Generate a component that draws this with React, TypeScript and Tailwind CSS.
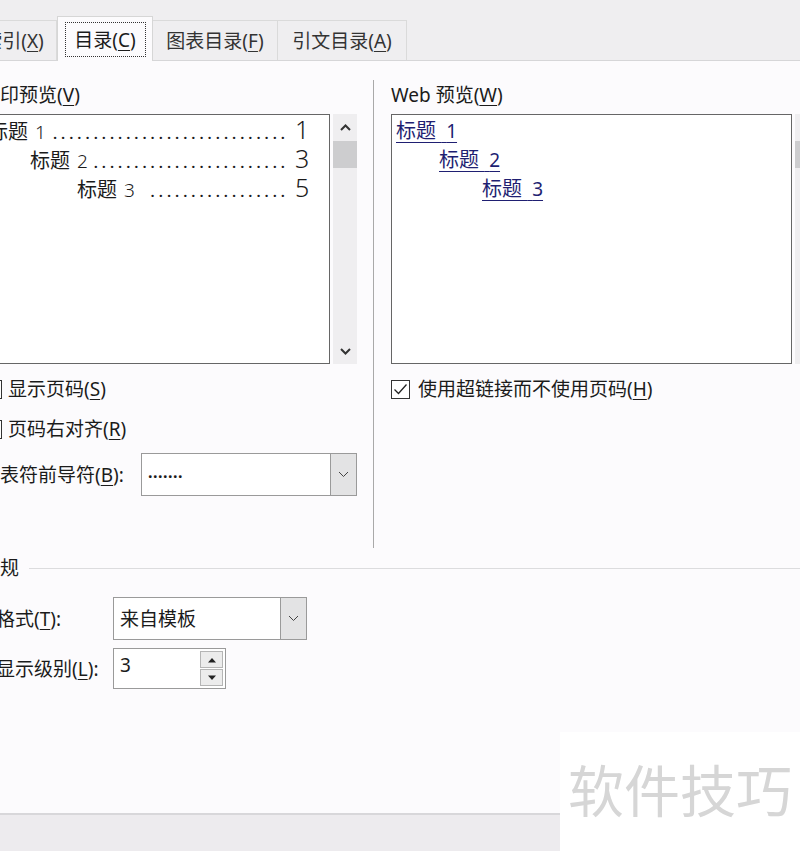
import React from 'react';

function Mn({ k }: { k: string }) {
  return (
    <>
      (<span className="underline underline-offset-[3px] decoration-1">{k}</span>)
    </>
  );
}

function CheckBox({ checked }: { checked?: boolean }) {
  return (
    <span className="flex h-[19px] w-[19px] shrink-0 items-center justify-center border border-[#333] bg-white">
      {checked && (
        <svg width="15" height="15" viewBox="0 0 15 15">
          <path d="M1.5 7.5 L5.5 11.5 L13.5 2.5" fill="none" stroke="#222" strokeWidth="1.3" />
        </svg>
      )}
    </span>
  );
}

function Chevron({ up, bold }: { up?: boolean; bold?: boolean }) {
  return (
    <svg width="11" height="7" viewBox="0 0 11 7">
      <path
        d={up ? 'M1 6 L5.5 1.5 L10 6' : 'M1 1 L5.5 5.5 L10 1'}
        fill="none"
        stroke={bold ? '#333' : '#444'}
        strokeWidth={bold ? 2 : 1}
      />
    </svg>
  );
}

function VScroll() {
  return (
    <div className="ml-[3px] flex w-[24px] shrink-0 flex-col bg-[#efeef0]">
      <div className="flex h-[27px] items-center justify-center">
        <Chevron up bold />
      </div>
      <div className="h-[27px] bg-[#cdcdcf]" />
      <div className="flex-1" />
      <div className="flex h-[25px] items-center justify-center">
        <Chevron bold />
      </div>
    </div>
  );
}

function Combo({ value, className }: { value: React.ReactNode; className: string }) {
  return (
    <div className={`flex h-[43px] shrink-0 border border-[#9a9a9a] bg-white ${className}`}>
      <div className="flex flex-1 items-center pl-[6px]">{value}</div>
      <div className="flex w-[26px] items-center justify-center border-l border-[#9a9a9a] bg-[#e3e3e4]">
        <Chevron />
      </div>
    </div>
  );
}

function Tri({ up }: { up?: boolean }) {
  return (
    <svg width="10" height="6" viewBox="0 0 10 6">
      <path d={up ? 'M1 5.5 L5 1 L9 5.5 Z' : 'M1 0.5 L5 5 L9 0.5 Z'} fill="#222" />
    </svg>
  );
}

// 打印预览里的三级标题，点数按参考图数出来的
const printRows = [
  { pad: 'pl-[27px]', n: '1', gap: 'mr-[3px]', dots: 29, page: '1' },
  { pad: 'pl-[69px]', n: '2', gap: 'mr-[2px]', dots: 24, page: '3' },
  { pad: 'pl-[116px]', n: '3', gap: 'mr-[8px]', dots: 17, page: '5' },
];

const webRows = [
  { pad: 'pl-[4px]', n: '1' },
  { pad: 'pl-[47px]', n: '2' },
  { pad: 'pl-[90px]', n: '3' },
];

export default function App() {
  return (
    <div className="relative flex h-[851px] w-[800px] flex-col overflow-hidden bg-[#fcfbfd] font-['Noto_Sans','Noto_Sans_CJK_SC',sans-serif] text-[19px] leading-[24px] text-[#1b1b1b]">
      {/* tab strip */}
      <div className="flex h-[61px] shrink-0 items-end border-b border-[#d6d6d8] bg-[#efeef0]">
        <div className="-ml-[30px] flex h-[40px] w-[87px] shrink-0 items-center justify-center border border-b-0 border-[#dadada] text-[#333]">
          索引<Mn k="X" />
        </div>
        <div className="relative z-10 -mb-px flex h-[45px] w-[96px] shrink-0 items-start justify-center border border-b-0 border-[#d6d6d6] bg-[#fcfbfd] pt-[5px]">
          <div className="flex h-[35px] w-[81px] items-center justify-center border border-dotted border-[#333]">
            目录<Mn k="C" />
          </div>
        </div>
        <div className="flex h-[40px] w-[125px] shrink-0 items-center justify-center border-t border-r border-[#dadada] text-[#333]">
          图表目录<Mn k="F" />
        </div>
        <div className="flex h-[40px] w-[129px] shrink-0 items-center justify-center border-t border-r border-[#dadada] text-[#333]">
          引文目录<Mn k="A" />
        </div>
      </div>

      {/* previews */}
      <div className="flex pt-[19px]">
        <div className="flex w-[357px] shrink-0 flex-col">
          <div className="-ml-[19px] mt-[1px] h-[28px] leading-[28px]">
            打印预览<Mn k="V" />
          </div>
          <div className="mt-[5px] flex h-[250px]">
            <div className="-ml-[40px] w-[370px] shrink-0 border border-[#666] bg-white pt-[1px]">
              {printRows.map((r) => (
                <div key={r.n} className={`flex h-[29px] items-baseline pr-[20px] pt-[3px] leading-[20px] ${r.pad}`}>
                  <span className="text-[20px]">标题</span>
                  <span className={`ml-[7px] text-[19px] font-light ${r.gap}`}>{r.n}</span>
                  <span className="flex min-w-0 flex-1 justify-end overflow-hidden whitespace-nowrap text-[15px] font-semibold tracking-[4px]">
                    {'.'.repeat(r.dots)}
                  </span>
                  <span className="ml-[6px] w-[14px] text-right text-[25px] font-light">{r.page}</span>
                </div>
              ))}
            </div>
            <VScroll />
          </div>
          <div className="mt-[13px] flex h-[24px] items-center">
            <span className="-ml-[17px]">
              <CheckBox checked />
            </span>
            <span className="ml-[6px]">
              显示页码<Mn k="S" />
            </span>
          </div>
          <div className="mt-[16px] flex h-[24px] items-center">
            <span className="-ml-[17px]">
              <CheckBox checked />
            </span>
            <span className="ml-[6px]">
              页码右对齐<Mn k="R" />
            </span>
          </div>
          <div className="mt-[12px] flex items-center">
            <span className="-ml-[19px] w-[160px] shrink-0">
              制表符前导符<Mn k="B" />:
            </span>
            <Combo
              className="w-[216px]"
              value={<span className="-mt-[6px] text-[16px] font-bold tracking-[0.5px]">.......</span>}
            />
          </div>
        </div>

        <div className="ml-[16px] h-[468px] w-px shrink-0 bg-[#a9a9a9]" />

        <div className="ml-[17px] flex flex-1 flex-col">
          <div className="mt-[1px] h-[28px] whitespace-nowrap leading-[28px]">
            Web 预览<Mn k="W" />
          </div>
          <div className="mt-[5px] flex h-[250px]">
            <div className="w-[401px] shrink-0 border border-[#666] bg-white pt-[1px]">
              {webRows.map((r) => (
                <div key={r.n} className={`flex h-[29px] items-baseline leading-[29px] ${r.pad}`}>
                  <span className="whitespace-pre text-[20px] text-[#1f1f72] underline decoration-1 underline-offset-[4px]">
                    标题 <span className="text-[19px]"> {r.n}</span>
                  </span>
                </div>
              ))}
            </div>
            <VScroll />
          </div>
          <div className="mt-[13px] flex h-[24px] items-center">
            <CheckBox checked />
            <span className="ml-[8px] whitespace-nowrap">
              使用超链接而不使用页码<Mn k="H" />
            </span>
          </div>
        </div>
      </div>

      {/* general */}
      <div className="mt-[8px] flex h-[24px] items-center">
        <span className="-ml-[19px] shrink-0">常规</span>
        <div className="ml-[10px] h-px flex-1 bg-[#dcdcde]" />
      </div>
      <div className="mt-[17px] flex items-center">
        <span className="-ml-[4px] w-[117px] shrink-0">
          格式<Mn k="T" />:
        </span>
        <Combo className="w-[194px]" value={<span>来自模板</span>} />
      </div>
      <div className="mt-[8px] flex items-center">
        <span className="-ml-[4px] w-[117px] shrink-0">
          显示级别<Mn k="L" />:
        </span>
        <div className="flex h-[41px] w-[113px] shrink-0 border border-[#9a9a9a] bg-white">
          <div className="flex-1 pl-[6px] pt-[4px] text-[19px] leading-[24px]">3</div>
          <div className="mr-[2px] mt-[2px] flex w-[23px] flex-col">
            <div className="flex h-[17px] items-center justify-center border border-[#b5b5b5] bg-[#ececec]">
              <Tri up />
            </div>
            <div className="mt-[1px] flex h-[17px] items-center justify-center border border-[#b5b5b5] bg-[#ececec]">
              <Tri />
            </div>
          </div>
        </div>
      </div>

      <div className="flex-1" />
      <div className="h-[38px] shrink-0 border-t-2 border-[#d8d7da] bg-[#edebee]" />

      {/* watermark */}
      <div className="absolute bottom-0 right-0 h-[119px] w-[240px] bg-white pl-[8px] pt-[30px]">
        <span className="text-[56px] leading-none text-[#d6d6d6]">软件技巧</span>
      </div>
    </div>
  );
}
